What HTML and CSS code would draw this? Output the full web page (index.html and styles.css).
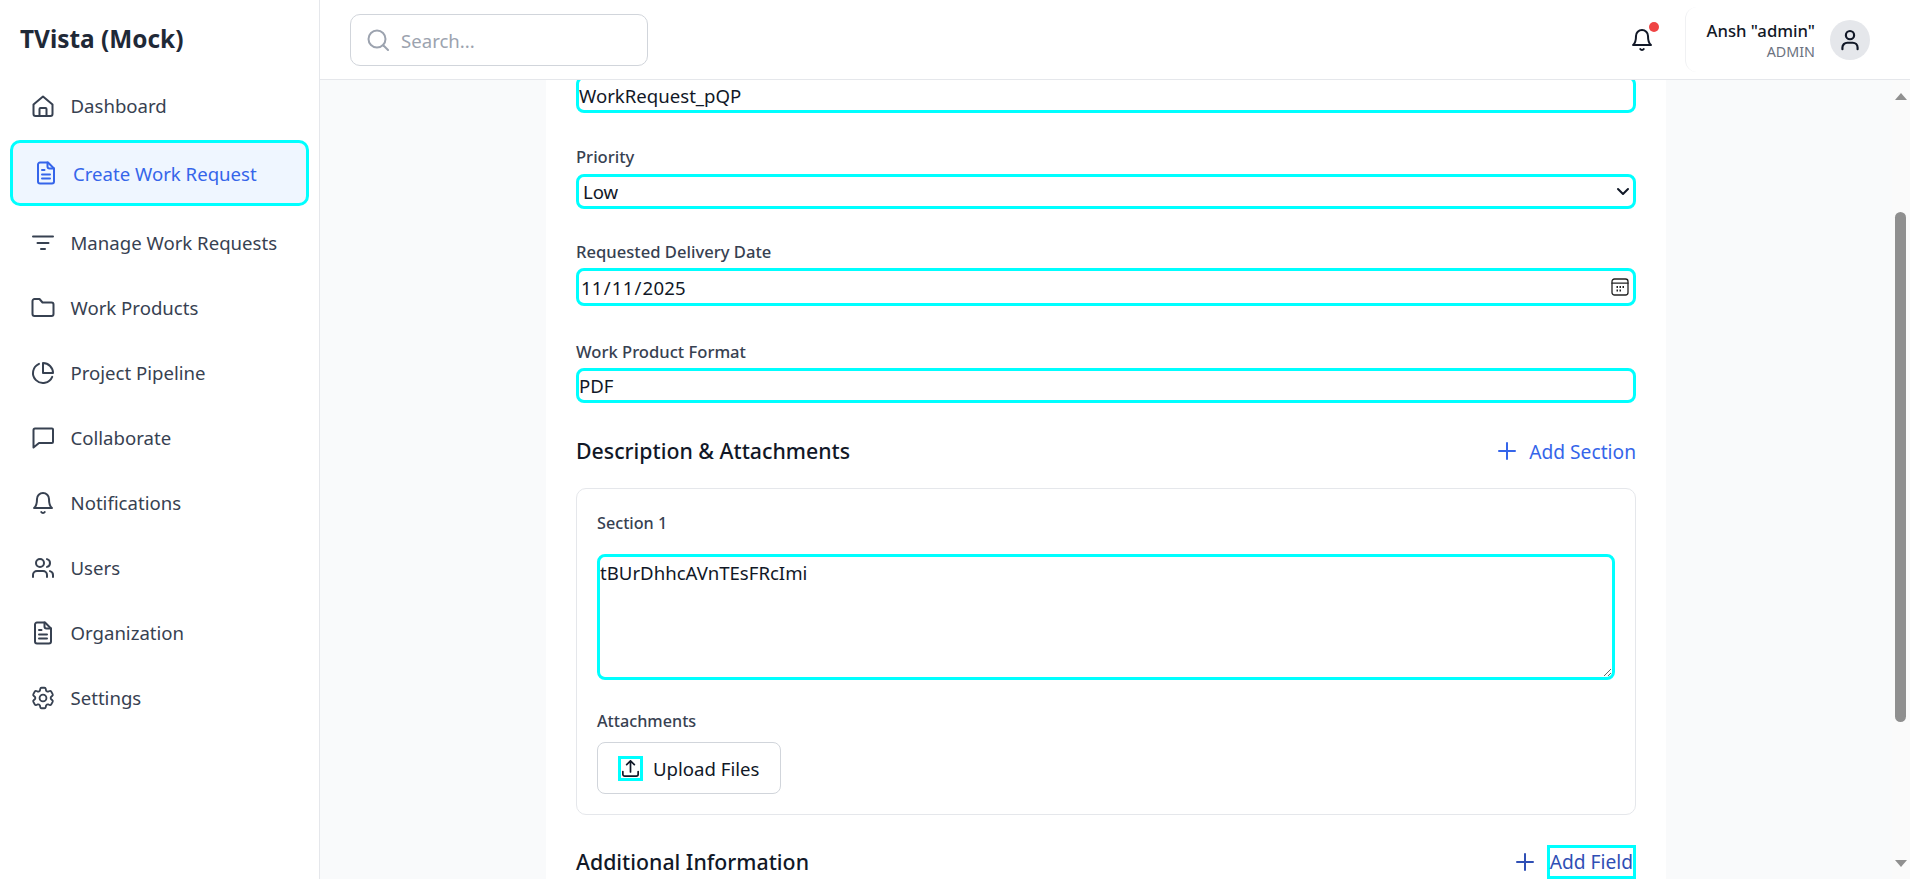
FILE: index.html
```html
<!DOCTYPE html>
<html lang="en">
<head>
    <meta charset="UTF-8">
    <title>TVista (Mock)</title>
    <link rel="stylesheet" href="styles.css">
</head>
<body>

    <!-- Sidebar -->
    <aside class="sidebar">
        <div class="brand">TVista (Mock)</div>
        <nav class="nav">
            <a class="nav-item">
                <svg class="icon" viewBox="0 0 24 24"><path d="M2.500 10.500 12 2.500l9.500 8V20a2 2 0 0 1-2 2h-15a2 2 0 0 1-2-2z"/><path d="M8.500 22v-7a1 1 0 0 1 1-1h5a1 1 0 0 1 1 1v7"/></svg>
                Dashboard
            </a>
            <a class="nav-item active">
                <svg class="icon" viewBox="0 0 24 24"><path d="M6 1.500h8l6 6v13a2 2 0 0 1-2 2H6a2 2 0 0 1-2-2v-17a2 2 0 0 1 2-2z"/><path d="M13.500 1.500v4a2 2 0 0 0 2 2H20"/><path d="M8 9h2.500M8 13.500h8M8 17.500h8"/></svg>
                Create Work Request
            </a>
            <a class="nav-item">
                <svg class="icon" viewBox="0 0 24 24"><path d="M2 5.500h20M6.500 12h11M10 18h4"/></svg>
                Manage Work Requests
            </a>
            <a class="nav-item">
                <svg class="icon" viewBox="0 0 24 24"><path d="M1.500 5a2 2 0 0 1 2-2h5l3 3.500h9a2 2 0 0 1 2 2V18a2 2 0 0 1-2 2h-17a2 2 0 0 1-2-2z"/></svg>
                Work Products
            </a>
            <a class="nav-item">
                <svg class="icon" viewBox="0 0 24 24"><path d="M21.210 15.890A10 10 0 1 1 8 2.830"/><path d="M22 12A10 10 0 0 0 12 2v10z"/></svg>
                Project Pipeline
            </a>
            <a class="nav-item">
                <svg class="icon" viewBox="0 0 24 24"><path d="M22 16a1 1 0 0 1-1 1H8l-5.500 4.500V4A1.500 1.500 0 0 1 4 2.500h17a1 1 0 0 1 1 1z"/></svg>
                Collaborate
            </a>
            <a class="nav-item">
                <svg class="icon" viewBox="0 0 24 24"><path d="M18 8A6 6 0 0 0 6 8c0 7-3 9-3 9h18s-3-2-3-9"/><path d="M13.730 21a2 2 0 0 1-3.460 0"/></svg>
                Notifications
            </a>
            <a class="nav-item">
                <svg class="icon" viewBox="0 0 24 24"><path d="M16 21v-2a4 4 0 0 0-4-4H6a4 4 0 0 0-4 4v2"/><circle cx="9" cy="7" r="4"/><path d="M22 21v-2a4 4 0 0 0-3-3.870M16 3.130a4 4 0 0 1 0 7.750"/></svg>
                Users
            </a>
            <a class="nav-item">
                <svg class="icon" viewBox="0 0 24 24"><path d="M6 1.500h8l6 6v13a2 2 0 0 1-2 2H6a2 2 0 0 1-2-2v-17a2 2 0 0 1 2-2z"/><path d="M13.500 1.500v4a2 2 0 0 0 2 2H20"/><path d="M8 9h2.500M8 13.500h8M8 17.500h8"/></svg>
                Organization
            </a>
            <a class="nav-item">
                <svg class="icon icon-thin" viewBox="1.500 1.500 21 21"><path d="M9.594 3.940c.09-.542.56-.94 1.110-.94h2.593c.55 0 1.020.398 1.110.940l.213 1.281c.063.374.313.686.645.870.074.04.147.083.22.127.324.196.72.257 1.075.124l1.217-.456a1.125 1.125 0 0 1 1.370.49l1.296 2.247a1.125 1.125 0 0 1-.26 1.431l-1.003.827c-.293.24-.438.613-.431.992a6.759 6.759 0 0 1 0 .255c-.007.378.138.75.43.99l1.005.828c.424.35.534.954.26 1.430l-1.298 2.247a1.125 1.125 0 0 1-1.369.491l-1.217-.456c-.355-.133-.75-.072-1.076.124a6.570 6.570 0 0 1-.22.128c-.331.183-.581.495-.644.869l-.213 1.280c-.09.543-.56.941-1.110.941h-2.594c-.55 0-1.020-.398-1.110-.94l-.213-1.281c-.062-.374-.312-.686-.644-.87a6.520 6.520 0 0 1-.22-.127c-.325-.196-.72-.257-1.076-.124l-1.217.456a1.125 1.125 0 0 1-1.369-.49l-1.297-2.247a1.125 1.125 0 0 1 .26-1.431l1.004-.827c.292-.24.437-.613.43-.992a6.932 6.932 0 0 1 0-.255c.007-.378-.138-.75-.43-.99l-1.004-.828a1.125 1.125 0 0 1-.26-1.430l1.297-2.247a1.125 1.125 0 0 1 1.370-.491l1.216.456c.356.133.751.072 1.076-.124.072-.044.146-.087.22-.128.332-.183.582-.495.644-.869l.214-1.281z"/><circle cx="12" cy="12" r="3"/></svg>
                Settings
            </a>
        </nav>
    </aside>

    <div class="page">
        <!-- Top bar -->
        <header class="topbar">
            <div class="search">
                <svg class="search-icon" viewBox="1 1 22 22"><circle cx="11" cy="11" r="8.500"/><path d="m17.500 17.500 4.500 4.500"/></svg>
                <span>Search...</span>
            </div>
            <div class="bell">
                <svg viewBox="0 0 24 24"><path d="M18 8A6 6 0 0 0 6 8c0 7-3 9-3 9h18s-3-2-3-9"/><path d="M13.730 21a2 2 0 0 1-3.460 0"/></svg>
                <span class="bell-dot"></span>
            </div>
            <div class="user">
                <div class="user-text">
                    <div class="user-name">Ansh "admin"</div>
                    <div class="user-role">ADMIN</div>
                </div>
                <div class="avatar">
                    <svg viewBox="0 0 24 24"><circle cx="12" cy="7.500" r="3.800"/><path d="M5 20.500v-1.500a4.500 4.500 0 0 1 4.500-4.500h5a4.500 4.500 0 0 1 4.500 4.500v1.500"/></svg>
                </div>
            </div>
        </header>

        <div class="content-wrap">
            <main class="content">
                <form class="card">
                    <input class="field input-first" type="text" value="WorkRequest_pQP">

                    <label class="label label-priority">Priority</label>
                    <div class="field-wrap">
                        <select class="field select">
                            <option>Low</option>
                            <option>Medium</option>
                            <option>High</option>
                        </select>
                        <svg class="select-arrow" viewBox="0 0 14 9"><path d="m2 2 5 5 5-5"/></svg>
                    </div>

                    <label class="label label-date">Requested Delivery Date</label>
                    <div class="field-wrap">
                        <input class="field input-date" type="date" value="2025-11-11">
                        <svg class="date-icon" viewBox="0 0 18 18">
                            <rect x="1" y="1" width="16" height="16" rx="2.500"/>
                            <path d="M1 5.200h16"/>
                            <path class="date-dots" d="M5.500 9h1.500M8.500 9H10M11.500 9H13M5.500 12.500h1.500M8.500 12.500H10"/>
                        </svg>
                    </div>

                    <label class="label label-format">Work Product Format</label>
                    <input class="field input-format" type="text" value="PDF">

                    <div class="section-head">
                        <h3>Description &amp; Attachments</h3>
                        <a class="add-link">
                            <svg viewBox="0 0 24 24"><path d="M12 4v16M4 12h16"/></svg>
                            Add Section
                        </a>
                    </div>

                    <div class="section-box">
                        <div class="section-title">Section 1</div>
                        <textarea class="field textarea">tBUrDhhcAVnTEsFRcImi</textarea>
                        <div class="section-title attach-title">Attachments</div>
                        <button type="button" class="upload">
                            <span class="upload-icon">
                                <svg viewBox="2 2 20 20"><path d="M3 15.500v3.250A2.250 2.250 0 0 0 5.250 21h13.500A2.250 2.250 0 0 0 21 18.750V15.500M7.500 7.500 12 3l4.500 4.500M12 3v13"/></svg>
                            </span>
                            Upload Files
                        </button>
                    </div>

                    <div class="section-head section-head-last">
                        <h3>Additional Information</h3>
                        <a class="add-link add-link-dark">
                            <svg viewBox="0 0 24 24"><path d="M12 4v16M4 12h16"/></svg>
                            <span class="add-field">Add Field</span>
                        </a>
                    </div>
                </form>
            </main>

            <!-- Scrollbar -->
            <div class="scrollbar">
                <span class="arrow-up"></span>
                <span class="thumb"></span>
                <span class="arrow-down"></span>
            </div>
        </div>
    </div>

</body>
</html>
```

FILE: styles.css
```css
* {
    box-sizing: border-box;
}

html, body {
    height: 100%;
}

body {
    margin: 0;
    display: flex;
    overflow: hidden;
    font-family: "Noto Sans", "Open Sans", Arial, sans-serif;
    color: #111827;
    background: #f9fafb;
}

svg {
    fill: none;
    stroke: currentColor;
    stroke-width: 2;
    stroke-linecap: round;
    stroke-linejoin: round;
}

svg.icon-thin {
    stroke-width: 1.6;
}

/* Sidebar */
.sidebar {
    width: 320px;
    flex-shrink: 0;
    background: #ffffff;
    border-right: 1px solid #e5e7eb;
}

.brand {
    height: 73px;
    padding: 23px 0 0 20px;
    font-size: 24.4px;
    line-height: 32px;
    font-weight: 700;
    color: #1f2937;
}

.nav-item {
    display: flex;
    align-items: center;
    gap: 15.5px;
    height: 65px;
    padding-left: 31px;
    font-size: 18.6px;
    color: #374151;
}

.icon {
    width: 24px;
    height: 24px;
    flex-shrink: 0;
}

.nav-item.active {
    width: 299px;
    height: 66px;
    margin: 2px 0 4px 10px;
    padding-left: 21px;
    gap: 15px;
    color: #3565ea;
    background: #eff6ff;
    border: 3px solid #00ffff;
    border-radius: 10px;
}

/* Top bar */
.page {
    flex: 1;
    min-width: 0;
    display: flex;
    flex-direction: column;
}

.topbar {
    height: 80px;
    flex-shrink: 0;
    display: flex;
    align-items: center;
    padding: 0 40px 0 30px;
    background: #ffffff;
    border-bottom: 1px solid #e5e7eb;
}

.search {
    width: 298px;
    height: 52px;
    display: flex;
    align-items: center;
    gap: 12px;
    margin-top: 1px;
    padding-left: 16px;
    margin-right: auto;
    font-size: 18.6px;
    color: #9ca3af;
    border: 1px solid #d1d5db;
    border-radius: 10px;
}

.search-icon {
    width: 22px;
    height: 22px;
}

.bell {
    position: relative;
    width: 24px;
    height: 24px;
    margin-top: 1px;
    margin-right: 31px;
    color: #111827;
}

.bell svg {
    width: 100%;
    height: 100%;
    display: block;
}

.bell-dot {
    position: absolute;
    top: -6px;
    right: -5px;
    width: 10px;
    height: 10px;
    background: #ef4444;
    border-radius: 50%;
}

.user {
    height: 65px;
    display: flex;
    align-items: center;
    gap: 15px;
    padding-left: 21px;
    border-left: 1px solid #f0f1f3;
    border-radius: 12px;
}

.user-text {
    margin-top: 3px;
    text-align: right;
}

.user-name {
    font-size: 16.7px;
    line-height: 22px;
    font-weight: 500;
}

.user-role {
    font-size: 14.3px;
    line-height: 20px;
    color: #6b7280;
}

.avatar {
    width: 40px;
    height: 40px;
    display: flex;
    align-items: center;
    justify-content: center;
    background: #e5e7eb;
    border-radius: 50%;
}

.avatar svg {
    width: 26px;
    height: 26px;
}

/* Form */
.content-wrap {
    flex: 1;
    min-height: 0;
    display: flex;
}

.content {
    flex: 1;
    min-width: 0;
    overflow: hidden;
    display: flex;
    justify-content: center;
}

.card {
    width: 1120px;
    height: 900px;
    flex-shrink: 0;
    padding: 0 30px;
    background: #ffffff;
}

.field {
    display: block;
    width: 100%;
    font-family: inherit;
    font-size: 18.6px;
    color: #111827;
    background: #ffffff;
    border: 3px solid #00ffff;
    border-radius: 8px;
    outline: none;
}

.field-wrap {
    position: relative;
}

.input-first {
    height: 37px;
    margin-top: -4px;
    padding: 1px 0 0 0;
}

.label {
    display: block;
    margin-bottom: 4px;
    font-size: 16.6px;
    line-height: 24px;
    font-weight: 500;
    color: #374151;
}

.label-priority {
    margin-top: 32px;
    margin-bottom: 5px;
}

.label-date {
    margin-top: 31px;
}

.label-format {
    margin-top: 34px;
}

.select {
    height: 35px;
    padding: 0 0 0 4px;
    appearance: none;
}

.select-arrow {
    position: absolute;
    top: 13px;
    right: 6px;
    width: 14px;
    height: 9px;
    color: #111827;
    pointer-events: none;
}

.input-date {
    height: 38px;
    padding: 0 0 0 1px;
    letter-spacing: 0.2px;
}

.input-date::-webkit-calendar-picker-indicator {
    opacity: 0;
}

.date-icon {
    position: absolute;
    top: 10px;
    right: 7px;
    width: 18px;
    height: 18px;
    stroke-width: 1.3;
    color: #222222;
    pointer-events: none;
}

.date-icon .date-dots {
    stroke-width: 1.8;
    stroke-linecap: butt;
}

.input-format {
    height: 35px;
    padding: 0;
}

.section-head {
    display: flex;
    align-items: center;
    justify-content: space-between;
    margin-top: 31px;
}

.section-head h3 {
    margin: 0;
    font-size: 21.3px;
    line-height: 34px;
    font-weight: 500;
    color: #111827;
}

.add-link {
    display: flex;
    align-items: center;
    gap: 10px;
    font-size: 19.2px;
    color: #3565ea;
}

.add-link svg {
    width: 24px;
    height: 24px;
}

.section-box {
    height: 327px;
    margin-top: 20px;
    padding: 22px 20px;
    border: 1px solid #e5e7eb;
    border-radius: 10px;
}

.section-title {
    font-size: 16.2px;
    line-height: 24px;
    font-weight: 500;
    color: #374151;
}

.textarea {
    height: 126px;
    margin-top: 19px;
    padding: 3px 0 0 0;
    resize: vertical;
}

.attach-title {
    margin-top: 29px;
}

.upload {
    display: flex;
    align-items: center;
    gap: 10px;
    width: 184px;
    height: 52px;
    margin-top: 9px;
    padding: 0 20px;
    font-family: inherit;
    font-size: 18.6px;
    white-space: nowrap;
    color: #111827;
    background: #ffffff;
    border: 1px solid #d1d5db;
    border-radius: 8px;
}

.upload-icon {
    display: flex;
    flex-shrink: 0;
    width: 25px;
    height: 25px;
    padding: 1px;
    border: 3px solid #00ffff;
}

.upload-icon svg {
    width: 100%;
    height: 100%;
}

.section-head-last {
    margin-top: 30px;
}

.add-link-dark {
    color: #2f4fb5;
}

.add-field {
    padding: 0;
    line-height: 28px;
    border: 3px solid #00ffff;
}

/* Scrollbar */
.scrollbar {
    width: 18px;
    flex-shrink: 0;
    position: relative;
    background: #fafafa;
}

.thumb {
    position: absolute;
    top: 132px;
    left: 3px;
    width: 11px;
    height: 510px;
    background: #8f8f8f;
    border-radius: 6px;
}

.arrow-up, .arrow-down {
    position: absolute;
    left: 3px;
    width: 0;
    height: 0;
    border-left: 6px solid transparent;
    border-right: 6px solid transparent;
}

.arrow-up {
    top: 13px;
    border-bottom: 7px solid #8f8f8f;
}

.arrow-down {
    bottom: 12px;
    border-top: 7px solid #8f8f8f;
}
```
